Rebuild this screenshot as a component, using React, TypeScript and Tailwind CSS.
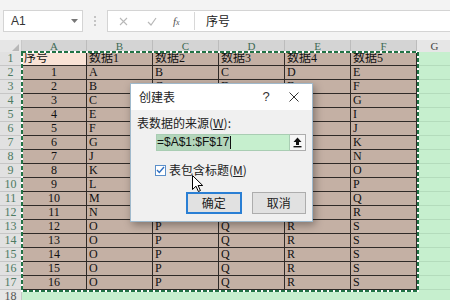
import type { JSX } from "react/jsx-runtime";

const letters = ["A", "B", "C", "D", "E", "F"];
const widths = ["w-[65px]", "w-[66px]", "w-[66px]", "w-[66px]", "w-[66px]", "w-[66px]"];

const rows: string[][] = [
  ["序号", "数据1", "数据2", "数据3", "数据4", "数据5"],
  ["1", "A", "B", "C", "D", "E"],
  ["2", "B", "C", "D", "E", "F"],
  ["3", "C", "D", "E", "F", "G"],
  ["4", "E", "F", "G", "H", "I"],
  ["5", "F", "G", "H", "I", "J"],
  ["6", "G", "H", "I", "J", "K"],
  ["7", "J", "K", "L", "M", "N"],
  ["8", "K", "L", "M", "N", "O"],
  ["9", "L", "M", "N", "O", "P"],
  ["10", "M", "N", "O", "P", "Q"],
  ["11", "N", "O", "P", "Q", "R"],
  ["12", "O", "P", "Q", "R", "S"],
  ["13", "O", "P", "Q", "R", "S"],
  ["14", "O", "P", "Q", "R", "S"],
  ["15", "O", "P", "Q", "R", "S"],
  ["16", "O", "P", "Q", "R", "S"],
];

const cellFont = { fontFamily: '"Liberation Serif", "Noto Sans CJK SC", serif' };
const uiFont = { fontFamily: '"Noto Sans CJK SC", "Liberation Sans", sans-serif' };

function FormulaBar(): JSX.Element {
  return (
    <div className="h-[40px] bg-[#f3f3f3] flex items-start pt-[10px] pl-[3px]">
      {/* name box */}
      <div className="w-[80px] h-[22px] bg-white border border-[#d4d4d4] flex items-center justify-between pl-[7px] pr-[4px]">
        <span className="text-[12px] text-[#333]" style={{ fontFamily: '"Liberation Sans", sans-serif' }}>A1</span>
        <svg width="7" height="4" viewBox="0 0 7 4"><path d="M0 0h7L3.5 4z" fill="#777" /></svg>
      </div>
      {/* grip */}
      <div className="w-[24px] h-[22px] flex flex-col items-center justify-center gap-[2px]">
        <div className="w-[2px] h-[2px] bg-[#c4c4c4]" />
        <div className="w-[2px] h-[2px] bg-[#c4c4c4]" />
        <div className="w-[2px] h-[2px] bg-[#c4c4c4]" />
      </div>
      {/* formula input */}
      <div className="flex-1 h-[22px] bg-white border border-[#d4d4d4] border-r-0 flex items-center">
        <div className="w-[86px] flex items-center h-full">
          <svg className="ml-[11px]" width="9" height="9" viewBox="0 0 9 9">
            <path d="M1 1l7 7M8 1L1 8" stroke="#b8b8b8" strokeWidth="1.1" />
          </svg>
          <svg className="ml-[19px]" width="10" height="9" viewBox="0 0 10 9">
            <path d="M1 5l3 3 5-7" stroke="#b8b8b8" strokeWidth="1.2" fill="none" />
          </svg>
          <span className="ml-[16px] text-[11px] italic text-[#555]" style={{ fontFamily: '"Liberation Serif", serif' }}>
            f<span className="text-[8px]">x</span>
          </span>
        </div>
        <div className="w-px h-[18px] bg-[#d8d8d8]" />
        <span className="ml-[11px] text-[12px] text-[#222]" style={uiFont}>序号</span>
      </div>
    </div>
  );
}

function ColumnHeader(): JSX.Element {
  return (
    <div className="flex h-[12px] text-[11px] leading-[12px]" style={cellFont}>
      <div className="w-[22px] bg-[#e6e6e6] border-r border-[#c8c8c8] flex items-end justify-end pr-[2px] pb-[1px]">
        <svg width="7" height="7" viewBox="0 0 7 7"><path d="M7 0v7H0z" fill="#b8b8b8" /></svg>
      </div>
      {letters.map((l, i) => (
        <div
          key={l}
          className={`${widths[i]} bg-[#d4d4d4] border-r border-[#bcbcbc] text-center text-[#3f6b54]`}
        >
          {l}
        </div>
      ))}
      <div className="flex-1 bg-[#e6e6e6] text-center text-[#444] pl-[2px]">G</div>
    </div>
  );
}

function Sheet(): JSX.Element {
  return (
    <div className="relative">
      <ColumnHeader />
      {rows.map((r, ri) => (
        <div key={ri} className="flex h-[14px] text-[12px] leading-[13px]" style={cellFont}>
          <div className="w-[22px] bg-[#e1e1e1] border-r border-b border-[#c6c6c6] text-center text-[#4d7a62]">
            {ri + 1}
          </div>
          {r.map((v, ci) => (
            <div
              key={ci}
              className={`${widths[ci]} border-r border-b border-[#2f2a27] overflow-hidden whitespace-nowrap ${
                ri === 0 && ci === 0 ? "bg-[#f9e2d5]" : "bg-[#c4b0a4]"
              } ${ci === 0 && ri > 0 ? "text-center" : "pl-[2px]"} text-[#111]`}
            >
              {v}
            </div>
          ))}
          <div className="flex-1 bg-[#c6efce] border-b border-[#b4dcbc]" />
        </div>
      ))}
      <div className="flex h-[14px] text-[12px] leading-[13px]" style={cellFont}>
        <div className="w-[22px] bg-[#e6e6e6] border-r border-[#c6c6c6] text-center text-[#555]">18</div>
        <div className="flex-1 bg-[#c6efce]" />
      </div>

      {/* marching ants around A1:F17 */}
      <svg className="absolute left-[21px] top-[11px] pointer-events-none" width="398" height="241">
        <rect x="1" y="1" width="396" height="239" fill="none" stroke="#ffffff" strokeWidth="2" />
        <rect x="1" y="1" width="396" height="239" fill="none" stroke="#217346" strokeWidth="2" strokeDasharray="4 2" />
      </svg>
    </div>
  );
}

function Dialog(): JSX.Element {
  return (
    <div
      className="absolute left-[130px] top-[83px] w-[183px] h-[139px] bg-[#f0f0f0] border border-[#9fb9cc] shadow-[2px_3px_8px_rgba(0,0,0,0.35)] flex flex-col"
      style={uiFont}
    >
      <div className="h-[26px] bg-white flex items-center pl-[8px] text-[12px] text-[#222]">
        <span className="flex-1">创建表</span>
        <span className="w-[20px] text-center text-[13px] text-[#333]" style={{ fontFamily: '"Liberation Sans", sans-serif' }}>?</span>
        <div className="w-[36px] flex justify-center">
          <svg width="10" height="10" viewBox="0 0 10 10">
            <path d="M0.5 0.5l9 9M9.5 0.5l-9 9" stroke="#333" strokeWidth="1" />
          </svg>
        </div>
      </div>
      <div className="flex flex-col px-[6px] pt-[6px]">
        <div className="text-[12px] leading-[14px] text-[#222]">
          表数据的来源(<span className="underline">W</span>):
        </div>
        <div className="mt-[4px] ml-[19px] flex h-[17px]">
          <div className="w-[137px] h-full bg-[#c6efce] border border-[#a9cdb3] flex items-center">
            <span
              className="text-[12px] leading-[15px] bg-[#b3d6bb] text-[#111] pr-[1px]"
              style={{ fontFamily: '"Liberation Sans", sans-serif' }}
            >
              =$A$1:$F$17
            </span>
            <div className="w-px h-[13px] bg-[#111]" />
          </div>
          <div className="w-[16px] h-full bg-[#f6f6f6] border border-[#adadad] border-l-0 flex items-center justify-center">
            <svg width="9" height="11" viewBox="0 0 9 11">
              <path d="M4.5 0.5L0.5 5h2.5v3h3V5h2.5z" fill="#111" />
              <rect x="0.5" y="9" width="8" height="1.4" fill="#111" />
            </svg>
          </div>
        </div>
        <div className="mt-[12px] ml-[18px] flex items-center h-[14px]">
          <div className="w-[11px] h-[11px] bg-white border border-[#5b8fc9] flex items-center justify-center">
            <svg width="9" height="8" viewBox="0 0 9 8">
              <path d="M1 4l2.3 2.5L8 1" stroke="#2f6fc0" strokeWidth="1.4" fill="none" />
            </svg>
          </div>
          <span className="ml-[3px] text-[12px] text-[#222]">
            表包含标题(<span className="underline">M</span>)
          </span>
        </div>
        <div className="mt-[15px] ml-[49px] flex gap-[10px]">
          <div className="w-[57px] h-[22px] bg-[#e1e1e1] border-2 border-[#2a7fd4] flex items-center justify-center text-[12px] text-[#222]">
            确定
          </div>
          <div className="w-[56px] h-[22px] bg-[#e1e1e1] border border-[#adadad] flex items-center justify-center text-[12px] text-[#222]">
            取消
          </div>
        </div>
      </div>
    </div>
  );
}

export default function App(): JSX.Element {
  return (
    <div className="relative w-[450px] h-[300px] overflow-hidden bg-white">
      <FormulaBar />
      <Sheet />
      <Dialog />
      {/* mouse cursor */}
      <svg className="absolute left-[192px] top-[175px]" width="12" height="18" viewBox="0 0 12 18">
        <path d="M0.5 0.5v14l3.5-3.3 2.4 5.3 2-0.9-2.3-5.1h4.6z" fill="#fff" stroke="#000" strokeWidth="1" />
      </svg>
    </div>
  );
}
